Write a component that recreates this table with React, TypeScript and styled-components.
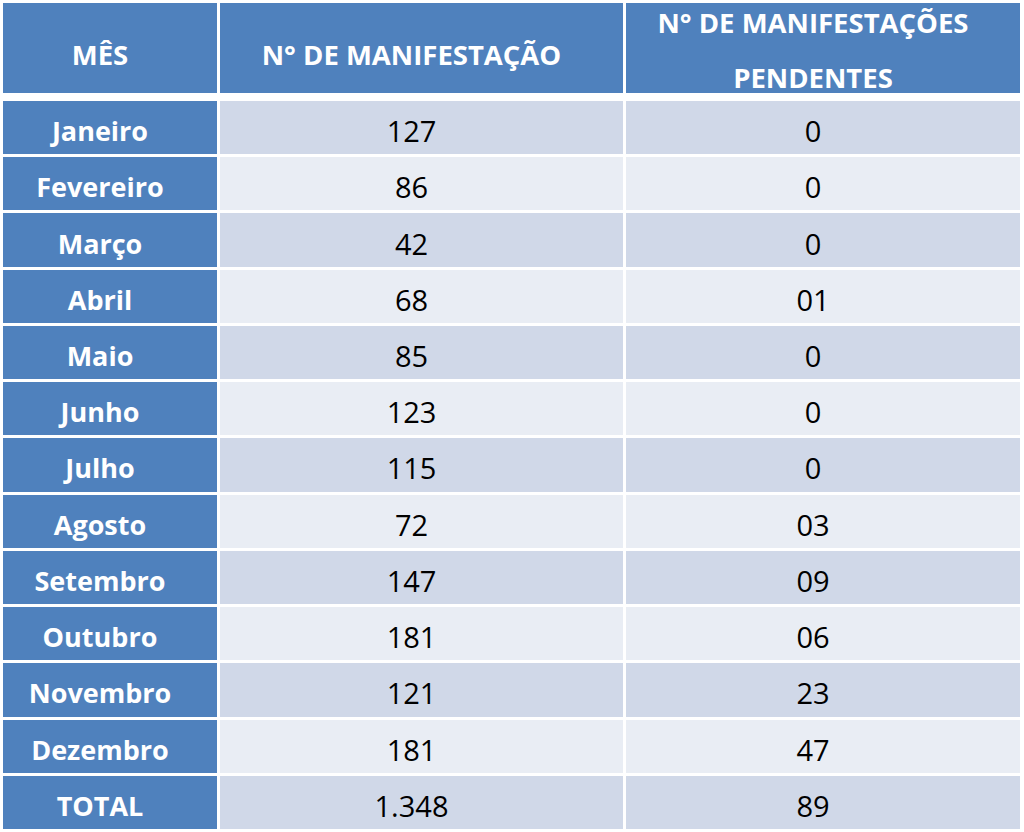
import React from 'react'
import styled, { createGlobalStyle } from 'styled-components'

const GlobalStyle = createGlobalStyle`
  html, body {
    margin: 0;
    padding: 0;
    background: #ffffff;
  }
  body {
    font-family: 'Open Sans', 'Liberation Sans', sans-serif;
  }
`

const Page = styled.div`
  width: 1024px;
  height: 832px;
  box-sizing: border-box;
  padding: 3px 4px 3px 3px;
  background: #ffffff;
`

const columns = '214px 403px 394px'

const HeaderRow = styled.div`
  display: grid;
  grid-template-columns: ${columns};
  grid-template-rows: 90px;
  height: 90px;
  column-gap: 3px;
  margin-bottom: 8px;
`

const Body = styled.div`
  display: grid;
  grid-template-columns: ${columns};
  grid-template-rows: repeat(13, 1fr);
  height: 728px;
  column-gap: 3px;
  row-gap: 3px;
`

const HeaderCell = styled.div<{ $twoLine?: boolean }>`
  background: #4f81bd;
  color: #ffffff;
  font-weight: 700;
  font-size: 27.5px;
  line-height: 55px;
  display: flex;
  align-items: center;
  justify-content: center;
  text-align: center;
  min-height: 0;
  height: 90px;
  padding: ${p => (p.$twoLine ? '4px' : '12px')} 20px 0 0;
  box-sizing: border-box;
  white-space: nowrap;
  overflow: visible;
`

const MonthCell = styled.div`
  background: #4f81bd;
  color: #ffffff;
  font-weight: 700;
  font-size: 27px;
  display: flex;
  align-items: center;
  justify-content: center;
  padding: 6px 20px 0 0;
  box-sizing: border-box;
`

const ValueCell = styled.div<{ $shade: boolean }>`
  background: ${p => (p.$shade ? '#d0d8e8' : '#e9edf4')};
  color: #000000;
  font-weight: 400;
  font-size: 29px;
  display: flex;
  align-items: center;
  justify-content: center;
  padding: 6px 20px 0 0;
  box-sizing: border-box;
`

const rows: [string, string, string][] = [
  ['Janeiro', '127', '0'],
  ['Fevereiro', '86', '0'],
  ['Março', '42', '0'],
  ['Abril', '68', '01'],
  ['Maio', '85', '0'],
  ['Junho', '123', '0'],
  ['Julho', '115', '0'],
  ['Agosto', '72', '03'],
  ['Setembro', '147', '09'],
  ['Outubro', '181', '06'],
  ['Novembro', '121', '23'],
  ['Dezembro', '181', '47'],
  ['TOTAL', '1.348', '89'],
]

export default function App() {
  return (
    <Page>
      <GlobalStyle />
      <HeaderRow>
        <HeaderCell>MÊS</HeaderCell>
        <HeaderCell>N° DE MANIFESTAÇÃO</HeaderCell>
        <HeaderCell $twoLine>
          N° DE MANIFESTAÇÕES
          <br />
          PENDENTES
        </HeaderCell>
      </HeaderRow>
      <Body>
        {rows.map(([month, total, pending], i) => {
          const shade = i % 2 === 0
          return (
            <React.Fragment key={month}>
              <MonthCell>{month}</MonthCell>
              <ValueCell $shade={shade}>{total}</ValueCell>
              <ValueCell $shade={shade}>{pending}</ValueCell>
            </React.Fragment>
          )
        })}
      </Body>
    </Page>
  )
}
